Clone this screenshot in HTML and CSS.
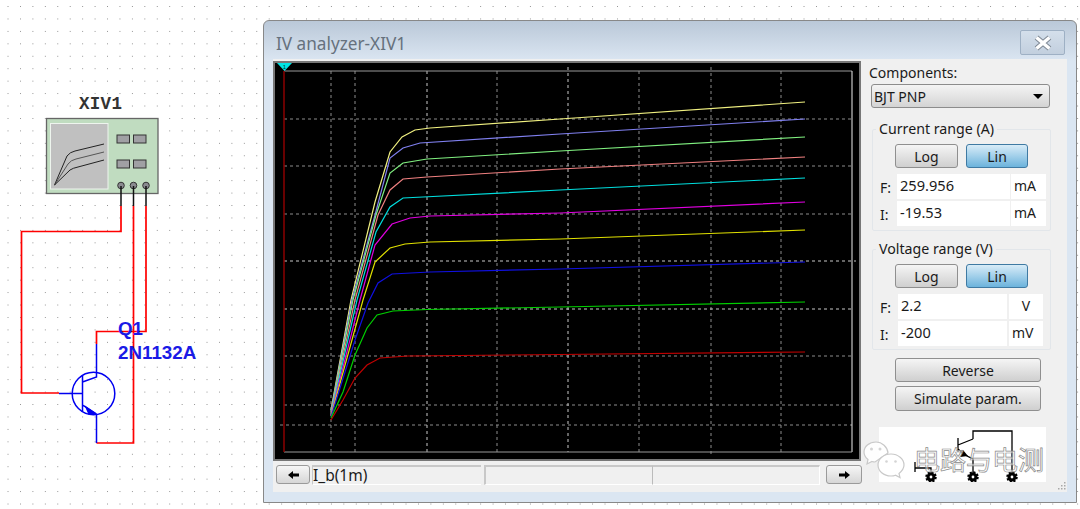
FILE: index.html
```html
<!DOCTYPE html>
<html lang="en">
<head>
<meta charset="utf-8">
<title>IV analyzer-XIV1</title>
<link rel="stylesheet" href="styles.css">
</head>
<body>
<svg class="schematic" width="262" height="509" viewBox="0 0 262 509">
  <text class="refdes" x="79" y="109">XIV1</text>
  <rect class="inst-body" x="46.5" y="118.5" width="111.5" height="75"/>
  <rect class="inst-screen" x="50.5" y="123.5" width="57.5" height="65.5"/>
  <path class="inst-curve" d="M54.5 185 L67 156 Q70 152 75 151 L104 144"/>
  <path class="inst-curve2" d="M54.5 185 L68 164 Q71 160 76 159 L104 152"/>
  <path class="inst-curve" d="M54.5 185 L70 170 Q73 168 78 167 L104 160"/>
  <rect class="inst-btn" x="117" y="135" width="12.5" height="8"/>
  <rect class="inst-btn" x="133.5" y="135" width="12.5" height="8"/>
  <rect class="inst-btn" x="117" y="160" width="12.5" height="8"/>
  <rect class="inst-btn" x="133.5" y="160" width="12.5" height="8"/>
  <circle class="inst-pin" cx="121" cy="185.5" r="3.3"/>
  <circle class="inst-pin" cx="133.5" cy="185.5" r="3.3"/>
  <circle class="inst-pin" cx="146" cy="185.5" r="3.3"/>
  <path class="wire-lead" d="M121 186V206M133.5 186V206M146 186V206"/>
  <path class="wire" d="M121 206V231.500H21.500V393H59"/>
  <path class="wire" d="M133.500 206V443H96.500"/>
  <path class="wire" d="M146 206V331.500H96.500V344"/>
  <g class="bjt">
    <circle cx="93.5" cy="393.5" r="21.3"/>
    <path d="M96.500 344V377L82.500 382M82.500 376V412M59 393.500H82.500M82.500 405L96.500 414.500V443"/>
    <path class="bjt-arrow" d="M86 407L95 413L89 414Z"/>
  </g>
  <text class="partname" x="118" y="335">Q1</text>
  <text class="partname" x="118" y="359">2N1132A</text>
</svg>

<section class="window">
  <header class="titlebar">
    <h1 class="title">IV analyzer-XIV1</h1>
    <button class="close" type="button" aria-label="Close">
      <svg width="20" height="16" viewBox="0 0 20 16"><path class="close-out" d="M3.500 2.500L16.500 13.500M16.500 2.500L3.500 13.500"/><path class="close-in" d="M3.500 2.500L16.500 13.500M16.500 2.500L3.500 13.500"/></svg>
    </button>
  </header>
  <div class="client">
    <div class="left">
      <div class="plot">
        <svg class="plot-svg" width="584" height="396" viewBox="275 63 584 396">
          <g class="grid">
            <path d="M331 71V455M355 71V455M497 71V455M639 71V455M711 67V455M781 71V455"/>
            <path d="M284 119H852M284 166H852M284 214H852M284 356H852M284 405H852M280 425H852"/>
          </g>
          <g class="grid-light">
            <path d="M427 71V452M568 67V452"/>
            <path d="M284 261H856M284 309H852"/>
          </g>
          <path class="frame-top" d="M284 71H852"/>
          <path class="frame-right" d="M852 71V452"/>
          <path class="frame-bottom" d="M284 452H852"/>
          <path class="cursor" d="M284 71V452"/>
          <path class="cursor-flag" d="M277 63H292L284.5 71Z"/>
          <text class="cursor-num" x="284.5" y="69">1</text>
          <g class="curves">
            <polyline class="c-pale" points="331,410 351,300 375,202 390,152 402,137 415,130 430,128 560,119 805,102"/>
            <polyline class="c-peri" points="331,411 352,300 375,215 390,158 403,148 420,143 560,134 805,119"/>
            <polyline class="c-lgreen" points="331,412 353,300 376,215 390,173 403,163 427,159 560,151 805,137"/>
            <polyline class="c-pink" points="331,413 355,300 378,215 390,190 403,179 427,177 560,169 805,157"/>
            <polyline class="c-cyan" points="331,414 357,300 376,232 390,207 403,198 423,197 560,190 805,178"/>
            <polyline class="c-magenta" points="331,415 360,300 375,245 392,224 410,218 430,216 560,213 805,202"/>
            <polyline class="c-yellow" points="331,416 363,300 375,262 390,248 405,244 430,242 560,239 805,230"/>
            <polyline class="c-blue" points="331,417 355,340 368,303 378,283 392,274 430,272 560,269 805,262"/>
            <polyline class="c-green" points="331,418 343,392 355,355 367,328 377,315 393,311 427,309.500 560,307 805,302"/>
            <polyline class="c-red" points="331,420 343,400 355,378 367,365 380,358 408,356 560,354.500 805,352"/>
          </g>
        </svg>
      </div>
      <div class="bottombar">
        <button class="nav nav-left" type="button" aria-label="Previous">
          <svg width="13" height="10" viewBox="0 0 13 10"><path d="M1 5L6 1V3.500H12V6.500H6V9Z"/></svg>
        </button>
        <div class="cell cell-a">I_b(1m)</div>
        <div class="cell cell-b"></div>
        <div class="cell cell-c"></div>
        <button class="nav nav-right" type="button" aria-label="Next">
          <svg width="13" height="10" viewBox="0 0 13 10"><path d="M12 5L7 1V3.500H1V6.500H7V9Z"/></svg>
        </button>
      </div>
    </div>

    <div class="panel">
      <div class="comp-label">Components:</div>
      <div class="select"><span>BJT PNP</span><i class="caret"></i></div>

      <fieldset class="group group-a">
        <legend>Current range (A)</legend>
        <div class="toggle">
          <button class="btn" type="button">Log</button>
          <button class="btn btn-on" type="button">Lin</button>
        </div>
        <div class="fields fields-a">
          <span class="flabel">F:</span><span class="val">259.956</span><span class="unit">mA</span>
          <span class="flabel">I:</span><span class="val">-19.53</span><span class="unit">mA</span>
        </div>
      </fieldset>

      <fieldset class="group group-b">
        <legend>Voltage range (V)</legend>
        <div class="toggle">
          <button class="btn" type="button">Log</button>
          <button class="btn btn-on" type="button">Lin</button>
        </div>
        <div class="fields fields-b">
          <span class="flabel">F:</span><span class="val">2.2</span><span class="unit unit-c">V</span>
          <span class="flabel">I:</span><span class="val">-200</span><span class="unit">mV</span>
        </div>
      </fieldset>

      <button class="btn wide wide-first" type="button">Reverse</button>
      <button class="btn wide wide-second" type="button">Simulate param.</button>

      <div class="logo">
        <svg class="logo-art" width="167" height="55" viewBox="879 427 167 55">
          <path class="la" d="M973 439V431H1012V467M973 439L958 445M958 438V452M958 449L965 455L973 459V477M915 462V472M915 468H931V477M1012 467V477"/>
          <path class="la-fill" d="M963 450L968 456L960 457Z"/>
          <circle class="gear" cx="931" cy="477" r="4.5"/>
          <circle class="gear" cx="973" cy="477" r="4.5"/>
          <circle class="gear" cx="1012" cy="477" r="4.5"/>
          <circle class="gear-c" cx="931" cy="477" r="1.4"/>
          <circle class="gear-c" cx="973" cy="477" r="1.4"/>
          <circle class="gear-c" cx="1012" cy="477" r="1.4"/>
        </svg>
        <svg class="wechat" width="44" height="40" viewBox="0 0 44 40">
          <path class="wc" d="M14 1C7 1 2 5.500 2 11C2 14 3.500 16.500 6 18.500L5 23L10 20.500C11 20.800 12 21 13 21L26 12C25.500 6 20 1 14 1Z"/>
          <path class="wc" d="M29 13C21.500 13 16 18 16 24C16 30 21.500 35 29 35C30.500 35 32 34.800 33.500 34.200L38 36.500L37 32.500C40 30 42 27.200 42 24C42 18 36 13 29 13Z"/>
          <circle class="wc-eye" cx="9.500" cy="8" r="1.500"/><circle class="wc-eye" cx="18" cy="8" r="1.500"/>
          <circle class="wc-eye" cx="24.500" cy="20.500" r="1.300"/><circle class="wc-eye" cx="33.500" cy="20.500" r="1.300"/>
        </svg>
        <span class="logo-text">电路与电测</span>
      </div>
      <svg class="grip" width="10" height="10" viewBox="0 0 10 10"><path d="M7 1h1.500v1.500H7zM4 4h1.500v1.500H4zM7 4h1.500v1.500H7zM1 7h1.500v1.500H1zM4 7h1.500v1.500H4zM7 7h1.500v1.500H7z"/></svg>
    </div>
  </div>
</section>
</body>
</html>
```
FILE: styles.css
```css
* { box-sizing: border-box; }
html, body { margin: 0; padding: 0; }
body {
  width: 1080px;
  height: 509px;
  overflow: hidden;
  position: relative;
  background-color: #fff;
  background-image: radial-gradient(circle, #8f8f8f 0.6px, rgba(255,255,255,0) 0.9px);
  background-size: 12.45px 12.45px;
  background-position: 1.8px 0.3px;
  font-family: "Noto Sans", "Liberation Sans", sans-serif;
  font-size: 14px;
  color: #1a1a1a;
}
button { font: inherit; color: inherit; margin: 0; padding: 0; }

/* schematic */
.schematic { position: absolute; left: 0; top: 0; }
.refdes { font: bold 17.5px "Liberation Mono", monospace; letter-spacing: 0.3px; fill: #333; }
.inst-body { fill: #c0dcc0; stroke: #666; stroke-width: 1.3; }
.inst-screen { fill: #c0c0c0; stroke: #eef5ee; stroke-width: 1; }
.inst-curve { fill: none; stroke: #222; stroke-width: 1; }
.inst-curve2 { fill: none; stroke: #555; stroke-width: 1; }
.inst-btn { fill: #a0a0a4; stroke: #333; stroke-width: 1; }
.inst-pin { fill: #8a8a90; stroke: #333; stroke-width: 1; }
.wire-lead { fill: none; stroke: #111; stroke-width: 1.5; }
.wire { fill: none; stroke: #f00; stroke-width: 1.7; }
.bjt circle, .bjt path { fill: none; stroke: #0000f0; stroke-width: 1.5; }
.bjt .bjt-arrow { fill: #0000f0; }
.partname { font: bold 18.8px "Liberation Sans", sans-serif; fill: #1a1ae6; }

/* window */
.window {
  position: absolute;
  left: 263px;
  top: 20px;
  width: 814px;
  height: 483px;
  border: 1px solid #888;
  border-radius: 6px 6px 0 0;
  background: linear-gradient(#bac8d8 0, #dbe6f2 40px, #dbe6f2 100%);
  display: flex;
  flex-direction: column;
}
.titlebar {
  height: 38px;
  flex: none;
  display: flex;
  align-items: center;
  justify-content: space-between;
  padding: 10px 11px 4px 12px;
}
.title { margin: 0; font-family: "Noto Sans", sans-serif; font-weight: 400; font-size: 17.2px; color: #66717d; }
.close {
  width: 45px;
  height: 25px;
  border: 1px solid #9eb0c4;
  border-radius: 2px;
  background: linear-gradient(#d4dfeb, #c2cfde);
  display: flex;
  align-items: center;
  justify-content: center;
  margin-top: -1px;
}
.close-out { fill: none; stroke: #7e8894; stroke-width: 5.5; }
.close-in { fill: none; stroke: #fff; stroke-width: 3.5; }
.client {
  height: 433px;
  margin: 0 9px;
  background: #f0f0f0;
  display: flex;
}

/* plot */
.left { width: 589px; flex: none; padding-top: 2px; }
.plot { width: 588px; height: 400px; border: 2px solid #777; background: #000; }
.plot-svg { display: block; }
.grid path { fill: none; stroke: #8c8c8c; stroke-width: 1; stroke-dasharray: 3 3; }
.grid-light path { fill: none; stroke: #c8c8c8; stroke-width: 1; stroke-dasharray: 3 3; }
.frame-top, .frame-bottom { stroke: #999; stroke-width: 1; fill: none; }
.frame-right { stroke: #eee; stroke-width: 1; fill: none; }
.cursor { stroke: #8b0000; stroke-width: 1.5; fill: none; }
.cursor-flag { fill: #00e5e5; }
.cursor-num { font: 6px "Liberation Sans", sans-serif; text-anchor: middle; fill: #003333; }
.curves polyline { fill: none; stroke-width: 1.2; }
.c-red { stroke: #c00000; }
.c-green { stroke: #00d000; }
.c-blue { stroke: #1010e0; }
.c-yellow { stroke: #e0e000; }
.c-magenta { stroke: #e000e0; }
.c-cyan { stroke: #00dede; }
.c-pink { stroke: #f08080; }
.c-lgreen { stroke: #80f080; }
.c-peri { stroke: #8080f0; }
.c-pale { stroke: #f0f080; }

/* bottom bar */
.bottombar { display: flex; height: 20px; margin-top: 4px; padding-left: 3px; }
.nav {
  width: 34px;
  height: 19px;
  border: 1px solid #9a9a9a;
  border-radius: 3px;
  background: linear-gradient(#f6f6f6, #d6d6d6);
  display: flex;
  align-items: center;
  justify-content: center;
  flex: none;
}
.nav-right { width: 36px; margin-left: 6px; }
.nav path { fill: #000; }
.cell {
  height: 20px;
  border-top: 2px solid #c8c8c8;
  border-bottom: 1px solid #fff;
  line-height: 17px;
  flex: none;
}
.cell-a { width: 169px; margin-left: 2px; border-left: 1px solid #c8c8c8; font-size: 15.5px; white-space: nowrap; }
.cell-b { width: 168px; margin-left: 3px; border-left: 2px solid #c8c8c8; }
.cell-c { width: 168px; border-left: 1px solid #bbb; border-right: 1px solid #fff; margin-left: 0; }

/* right panel */
.panel { width: 205px; flex: none; display: flex; flex-direction: column; position: relative; }
.comp-label { height: 18px; margin: 5px 0 0 7px; line-height: 18px; }
.select {
  width: 179px;
  height: 24px;
  margin: 2px 0 0 9px;
  border: 1px solid #8c8c8c;
  border-radius: 3px;
  background: linear-gradient(#f4f4f4, #d4d4d4);
  display: flex;
  align-items: center;
  justify-content: space-between;
  padding: 0 6px 0 2px;
  flex: none;
}
.caret { width: 0; height: 0; border: 5px solid transparent; border-top: 5px solid #000; border-bottom: 0; }
.group {
  width: 179px;
  margin: 0 0 0 10px;
  padding: 6px 0 0 0;
  border: 1px solid #e2e6ea;
  border-radius: 2px;
  flex: none;
}
.group legend { padding: 0 3px; margin-left: 3px; height: 18px; line-height: 18px; font-size: 14.2px; white-space: nowrap; }
.group-a { height: 111px; margin-top: 12px; }
.group-b { height: 110px; margin-top: 9px; }
.toggle { display: flex; gap: 8px; margin-left: 22px; }
.btn {
  height: 24px;
  border: 1px solid #8f8f8f;
  border-radius: 3px;
  background: linear-gradient(#f5f5f5, #cfcfcf);
  flex: none;
}
.toggle .btn { width: 63px; }
.toggle .btn-on { width: 62px; }
.btn-on { background: linear-gradient(#d8ecf8, #6cb3dc); border-color: #3f7aa3; }
.fields { display: grid; row-gap: 2px; column-gap: 1px; margin-top: 6px; grid-auto-rows: 25px; }
.fields-a { grid-template-columns: 23px 113px 35px; }
.fields-b { grid-template-columns: 23px 109px 34px; column-gap: 2px; }
.flabel { padding-left: 7px; line-height: 28px; }
.val, .unit { background: #fff; padding: 0 3px; line-height: 23px; }
.val { font-size: 14.6px; }
.unit-c { text-align: center; }
.wide { width: 146px; margin-left: 33px; }
.wide-first { margin-top: 8px; }
.wide-second { margin-top: 4px; height: 25px; }
.logo { width: 167px; height: 55px; margin: 16px 0 0 17px; background: #fff; position: relative; flex: none; }
.logo-art { position: absolute; left: 0; top: 0; }
.la { fill: none; stroke: #000; stroke-width: 1.3; }
.la-fill { fill: #000; }
.gear { fill: #000; stroke: #000; stroke-width: 2.5; stroke-dasharray: 2 1.5; }
.gear-c { fill: #fff; }
.wechat { position: absolute; left: -17px; top: 14px; }
.wc { fill: rgba(255,255,255,0.9); stroke: #c9c9c9; stroke-width: 1.2; }
.wc-eye { fill: #d4d4d4; }
.logo-text {
  position: absolute;
  left: 35px;
  top: 17px;
  font-family: "Noto Sans CJK SC", sans-serif;
  font-size: 26px;
  line-height: 30px;
  color: rgba(255,255,255,0.55);
  -webkit-text-stroke: 0.7px #8a8a8a;
  white-space: nowrap;
}
.grip { position: absolute; right: 0; bottom: 1px; }
.grip path { fill: #a8a8a8; }
```
